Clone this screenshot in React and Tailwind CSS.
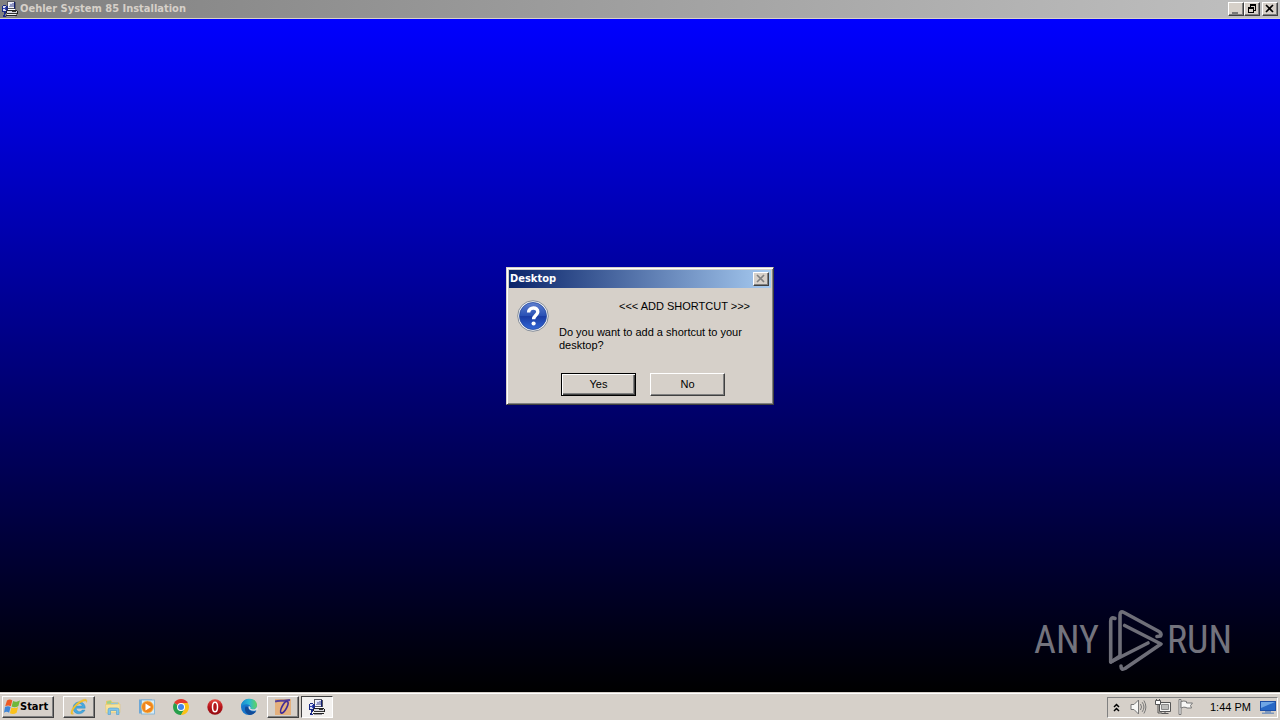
import { useState } from "react";

function InstallerIcon({ className }) {
    return (
        <svg viewBox="0 0 16 16" className={className} shapeRendering="crispEdges" aria-hidden="true">
            <path d="M5 0h8v1h1v7H5z" fill="#55555f" />
            <path d="M6 1h6v6H6z" fill="#f0f0f6" />
            <path d="M7 2h5v4H7z" fill="#8f95c0" />
            <path d="M7 2h3v1H8v2H7z" fill="#dfe4ff" />
            <path d="M12 1h1v7h-1z" fill="#14206e" />
            <path d="M0 5h1v6H0zM1 4h3v1H1zM4 5h2v5H4zM1 10h4v2H2v-1H1z" fill="#1a2a86" />
            <path d="M1 5h3v5H1z" fill="#dcdff2" />
            <path d="M1 7h2v1H1zM3 6h1v3H3z" fill="#3346b8" />
            <path d="M6 8h7v1H6z" fill="#fff" />
            <path d="M5 9h10v1H5zM4 10h1v2H4zM15 10h1v3h-1z" fill="#222" />
            <path d="M5 10h10v2H5z" fill="#d6d6de" />
            <path d="M10 10h4v1h-4zM5 12h10v1H5z" fill="#333" />
            <path d="M2 12h2v1H3v2h1v1H1v-2h1z" fill="#1a2a86" />
            <path d="M5 13h9v1H5z" fill="#f2f2f2" />
            <path d="M4 14h11v1H4z" fill="#222" />
            <path d="M5 15h8v1H5z" fill="#9a9aa4" />
        </svg>
    );
}

function WindowsLogo() {
    return (
        <svg viewBox="0 0 16 16" className="h-4 w-4 shrink-0" aria-hidden="true">
            <path d="M3 1.500C5 .2 6.800.3 8.300 1.500L6.800 7.300C5.200 6.200 3.200 6.200 1.200 7.300z" fill="#ed5a24" />
            <path d="M9.100 2c2 1 4.200 1 6.900-.8L14.400 7c-2.300 1.500-4.600 1.600-6.800.6z" fill="#6fb83b" />
            <path d="M1 8.100c2-1.100 4-1.100 5.600 0L5.100 13.700c-1.800-1.200-3.500-1.200-5.100.1z" fill="#3f86d8" />
            <path d="M7.400 8.400c2.200 1 4.400.9 6.700-.5L12.600 13.700c-2.300 1.600-4.500 1.600-6.700.5z" fill="#fbc21b" />
        </svg>
    );
}

function ExplorerIcon() {
    return (
        <svg viewBox="0 0 18 18" className="h-[18px] w-[18px]" aria-hidden="true">
            <path d="M15.200 10.200H6.200c.2 4 5 4.400 5.900 1.900h2.900C12.600 17.500 3 17.300 3.100 9.700 3.300 2 15.700 1.800 15.200 10.200zM6.300 8h5.900c-.3-3.100-5.400-3.100-5.900 0z" fill="#45a9e0" stroke="#2583bd" strokeWidth=".4" fillRule="evenodd" />
            <path d="M3.700 15.800C-.8 18.400.2 11 6.500 5.500 12.300.5 18.500-.6 16.500 4.500c.1-3-4.300-1.500-8.700 2.200C3.500 10.500.9 15.200 3.700 15.800z" fill="#f7c52b" stroke="#dca51b" strokeWidth=".3" />
        </svg>
    );
}

function FolderIcon() {
    return (
        <svg viewBox="0 0 18 18" className="h-[18px] w-[18px]" aria-hidden="true">
            <path d="M2 3l5-1 1 2 7 .5V14H2z" fill="#e9c963" />
            <path d="M3 3.500l4-.7.500 3H3z" fill="#9bd08b" />
            <path d="M7 5l7-.5V8H7z" fill="#86c3e8" />
            <path d="M1.500 6.500L16 6v8.500L2 15z" fill="#f8e29a" stroke="#dfc26b" strokeWidth=".5" />
            <path d="M4 16.500v-4.500q0-2 2-2h7q2 0 2 2v4.500h-2.500v-4h-6v4z" fill="#81c4ea" stroke="#4d9dcc" strokeWidth=".6" />
        </svg>
    );
}

function MediaIcon() {
    return (
        <svg viewBox="0 0 18 18" className="h-[18px] w-[18px]" aria-hidden="true">
            <rect x="1" y="1.500" width="13" height="14" fill="#6da7d6" />
            <rect x="3.500" y="2" width="13" height="14" fill="#d7ecf8" stroke="#79aed5" strokeWidth=".8" />
            <circle cx="9.500" cy="9" r="6" fill="#f0861b" stroke="#fac15f" strokeWidth=".8" />
            <path d="M7.500 5.600l5.600 3.400-5.600 3.400z" fill="#fff" />
        </svg>
    );
}

function ChromeIcon() {
    return (
        <svg viewBox="0 0 18 18" className="h-[18px] w-[18px]" aria-hidden="true">
            <path d="M9 9L2.100 5A8 8 0 0 1 15.900 5z" fill="#e33b2e" />
            <path d="M9 9L2.100 5A8 8 0 0 0 9 17l3.500-6z" fill="#279f4a" />
            <path d="M9 9V5h6.900A8 8 0 0 1 9 17l3.500-6z" fill="#fbc116" />
            <circle cx="9" cy="9" r="4" fill="#fff" />
            <circle cx="9" cy="9" r="3" fill="#4285e8" />
        </svg>
    );
}

function OperaIcon() {
    return (
        <svg viewBox="0 0 18 18" className="h-[18px] w-[18px]" aria-hidden="true">
            <defs>
                <linearGradient id="opera" x1="0" y1="0" x2="0" y2="1">
                    <stop offset="0" stopColor="#e74b43" />
                    <stop offset=".5" stopColor="#b6141b" />
                    <stop offset="1" stopColor="#930c10" />
                </linearGradient>
            </defs>
            <circle cx="9" cy="9" r="7.700" fill="url(#opera)" />
            <ellipse cx="9" cy="9" rx="2.500" ry="4.800" fill="#b3151b" stroke="#fff" strokeWidth="1.500" />
        </svg>
    );
}

function EdgeIcon() {
    return (
        <svg viewBox="0 0 18 18" className="h-[18px] w-[18px]" aria-hidden="true">
            <defs>
                <linearGradient id="edge" x1="0" y1="0" x2="1" y2="0">
                    <stop offset="0" stopColor="#1788cf" />
                    <stop offset=".5" stopColor="#29b7d5" />
                    <stop offset="1" stopColor="#63d45c" />
                </linearGradient>
            </defs>
            <circle cx="9" cy="9" r="8" fill="#1776cb" />
            <path d="M1 9C1-1.500 17-1.500 17 7c0 5-6 4.800-6.800 3.300C12.400 7 5 4 1 9z" fill="url(#edge)" />
            <path d="M5.600 8.500c-2 3.500.9 8.300 4.400 8.400 3 0 5.200-2 6.200-4C12 15 8 12.300 8.500 9z" fill="#124b97" />
            <path d="M8.700 8.300c-1 3.500 3 5.500 7.600 4 .9-.4 1.200.3.700 1L18 11l-1-3c-.5 3.800-5.300 3.900-6.800 2.300.9-.8 0-2-1.500-2z" fill="#e0e0dd" />
        </svg>
    );
}

function SystemIcon() {
    return (
        <svg viewBox="0 0 16 16" className="h-4 w-4" aria-hidden="true">
            <path d="M0 0h16v16H0z" fill="#e4b07d" />
            <path d="M0 2.500Q2 1.500 9 1.800L15 1" fill="none" stroke="#55409a" strokeWidth="2" />
            <ellipse cx="9.300" cy="8.300" rx="2.300" ry="6.500" transform="rotate(28 9.300 8.300)" fill="none" stroke="#402c98" strokeWidth="1.700" />
        </svg>
    );
}

function QuestionIcon() {
    return (
        <svg viewBox="0 0 32 32" className="h-8 w-8 shrink-0" aria-hidden="true">
            <defs>
                <linearGradient id="question" x1="0" y1="0" x2="0" y2="1">
                    <stop offset="0" stopColor="#5f80cf" />
                    <stop offset=".5" stopColor="#2850b5" />
                    <stop offset=".52" stopColor="#1a3ca4" />
                    <stop offset="1" stopColor="#3267d6" />
                </linearGradient>
            </defs>
            <circle cx="16" cy="16" r="15.300" fill="#f2f4f7" stroke="#858d99" strokeWidth="1" />
            <circle cx="16" cy="16" r="13.500" fill="url(#question)" stroke="#2549a0" strokeWidth=".8" />
            <path d="M11.600 12.500c.2-6 9.400-5.800 9.200-.6-.1 3.300-4.200 3.500-4.200 7.300" fill="none" stroke="#fff" strokeWidth="3.400" />
            <circle cx="16.600" cy="23.500" r="2.100" fill="#fff" />
        </svg>
    );
}

function SpeakerIcon() {
    return (
        <svg viewBox="0 0 18 16" className="h-4 w-[18px]" fill="none" stroke="#777" aria-hidden="true">
            <path d="M1 5.500h3L8.500 1v14L4 10.500H1z" fill="#f7f7f5" />
            <path d="M10.500 5q2 3 0 6M12.200 3.200q3.500 4.800 0 9.600M13.900 1.500q4 6.500 0 13" />
        </svg>
    );
}

function NetworkIcon() {
    return (
        <svg viewBox="0 0 16 16" className="h-4 w-4" fill="none" stroke="#555" aria-hidden="true">
            <path d="M4.500 3.500h11v9h-11z" fill="#f5f5f3" />
            <path d="M6.500 5.500h7v5h-7z" fill="#bdbdbb" stroke="#888" />
            <path d="M10 12.500v2M6.500 14.500h7" />
            <path d="M.5 1.500h5v4h-5z" fill="#fff" />
            <path d="M1.500 0v2M4.500 0v2M3 5.500v8.500h4" />
        </svg>
    );
}

function FlagIcon() {
    return (
        <svg viewBox="0 0 16 16" className="h-4 w-4" fill="none" stroke="#777" aria-hidden="true">
            <path d="M1 .5h2v15H1z" fill="#fff" />
            <path d="M3 2.500q3-1 5.500 0v1.500h6l-2 2.500 1 2.500H8.500V8.500Q6 7.500 3 9z" fill="#f8f8f6" />
        </svg>
    );
}

function DesktopIcon() {
    return (
        <svg viewBox="0 0 16 16" className="h-4 w-4" aria-hidden="true">
            <path d="M0 2h16v10H0z" fill="#1d4fa6" />
            <path d="M1 3h14v8H1z" fill="#2868c5" />
            <path d="M1 3h14L1 9z" fill="#6fa6e5" />
            <path d="M5 12h6v1.500H5zM2 13.500h12V15H2z" fill="#7e98bd" />
        </svg>
    );
}

function Watermark() {
    return (
        <div className="absolute right-12 bottom-[20px] flex h-16 items-center gap-1 font-['Roboto_Condensed','Liberation_Sans_Narrow',sans-serif] text-[38px] leading-none text-[#73737d]">
            <span>ANY</span>
            <svg viewBox="0 0 56 64" className="ml-1 h-16 w-14" fill="none" stroke="#6e6e78" strokeWidth="3.600" strokeLinejoin="round" strokeLinecap="round" aria-hidden="true">
                <path d="M8 10.500Q3.700 8.500 3.700 13v41L41 35" />
                <path d="M13 47V7q0-4.500 4-2.500L52 23.500q3 2 1.500 4.500L50 28.500" />
                <path d="M17.700 17.500L54 36 18 60.500q-4 2-4-2.500" />
                <path d="M4 54L13 48" />
            </svg>
            <span>RUN</span>
        </div>
    );
}

const raised =
    "border border-t-white border-l-white border-r-[#404040] border-b-[#404040] bg-[#d6d0c9] shadow-[inset_-1px_-1px_0_#808080]";

const tasks = [
    { name: "Internet Explorer", icon: <ExplorerIcon />, state: "open" },
    { name: "Windows Explorer", icon: <FolderIcon /> },
    { name: "Media Player", icon: <MediaIcon /> },
    { name: "Chrome", icon: <ChromeIcon /> },
    { name: "Opera", icon: <OperaIcon /> },
    { name: "Edge", icon: <EdgeIcon /> },
    { name: "System 85", icon: <SystemIcon />, state: "open" },
    { name: "Installation", icon: <InstallerIcon className="h-4 w-4" />, state: "active" },
];

const taskStyles = {
    open: raised,
    active: "border border-t-[#404040] border-l-[#404040] border-r-white border-b-white bg-[#f3f1ef]",
};

function TitleBar() {
    return (
        <header className="flex h-[19px] items-center border-b border-[#d6d0c9] bg-linear-to-r/srgb from-[#808080] to-[#c0c0c0] px-[2px]">
            <InstallerIcon className="h-4 w-4" />
            <h1 className="ml-[2px] flex-1 text-[11px] font-bold text-[#d6d0c9] font-['DejaVu_Sans_Condensed',sans-serif]">
                Oehler System 85 Installation
            </h1>
            <div className="flex">
                <button aria-label="Minimize" className={`flex h-[14px] w-4 items-center justify-center ${raised}`}>
                    <svg viewBox="0 0 10 10" className="h-[10px] w-[10px]"><path d="M1 8h6v2H1z" fill="#777" /></svg>
                </button>
                <button aria-label="Restore" className={`flex h-[14px] w-4 items-center justify-center ${raised}`}>
                    <svg viewBox="0 0 10 10" className="h-[10px] w-[10px]" shapeRendering="crispEdges">
                        <path d="M3 0h6v7H7V6h1V2H4v1H3zM1 3h6v6H1zm1 2v3h4V5z" fill="#000" fillRule="evenodd" />
                    </svg>
                </button>
                <button aria-label="Close" className={`ml-[2px] flex h-[14px] w-4 items-center justify-center ${raised}`}>
                    <svg viewBox="0 0 10 10" className="h-[10px] w-[10px]" stroke="#000" strokeWidth="1.600"><path d="M1 1l7 7M8 1L1 8" /></svg>
                </button>
            </div>
        </header>
    );
}

function ShortcutDialog({ onClose }) {
    return (
        <div
            role="dialog"
            aria-labelledby="dialog-title"
            className="absolute top-[248px] left-1/2 w-[268px] -translate-x-1/2 border border-t-[#d6d0c9] border-l-[#d6d0c9] border-r-[#404040] border-b-[#404040] bg-[#d6d0c9] p-[2px] pb-2 shadow-[inset_1px_1px_0_#fff,inset_-1px_-1px_0_#808080]"
        >
            <div className="flex h-[18px] items-center justify-between bg-linear-to-r/srgb from-[#0a246a] to-[#a6caf0] pr-[2px] pl-px">
                <h2 id="dialog-title" className="text-[11px] font-bold text-white font-['DejaVu_Sans_Condensed',sans-serif]">
                    Desktop
                </h2>
                <button aria-label="Close" onClick={onClose} className={`flex h-[14px] w-4 items-center justify-center ${raised}`}>
                    <svg viewBox="0 0 10 10" className="h-[10px] w-[10px]" stroke="#808080" strokeWidth="1.600"><path d="M1 1l7 7M8 1L1 8" /></svg>
                </button>
            </div>
            <div className="flex gap-[10px] px-2 pt-3">
                <QuestionIcon />
                <div className="flex-1 text-[11px] leading-[13px]">
                    <p className="pl-[60px] whitespace-nowrap">{"<<< ADD SHORTCUT >>>"}</p>
                    <p className="mt-[13px]">
                        Do you want to add a shortcut to your
                        <br />
                        desktop?
                    </p>
                </div>
            </div>
            <div className="mt-[21px] flex gap-[14px] pl-[52px]">
                <button onClick={onClose} className="h-[23px] w-[75px] border border-black bg-[#d6d0c9] text-[11px] shadow-[inset_1px_1px_0_#fff,inset_-1px_-1px_0_#404040,inset_-2px_-2px_0_#808080]">
                    Yes
                </button>
                <button onClick={onClose} className={`h-[23px] w-[75px] text-[11px] ${raised}`}>
                    No
                </button>
            </div>
        </div>
    );
}

function Taskbar() {
    return (
        <footer className="flex h-7 items-center border-t border-[#d6d0c9] bg-[#d6d0c9] px-[2px] pt-px shadow-[inset_0_1px_0_#fff]">
            <button className={`flex h-[22px] w-[52px] items-center pl-px text-[11px] font-bold font-['DejaVu_Sans_Condensed',sans-serif] ${raised}`}>
                <WindowsLogo />
                Start
            </button>
            <nav className="ml-[9px] flex flex-1 gap-[2px]">
                {tasks.map((t) => (
                    <button key={t.name} aria-label={t.name} className={`flex h-[22px] w-8 items-center justify-center ${taskStyles[t.state] || ""}`}>
                        {t.icon}
                    </button>
                ))}
            </nav>
            <div className="flex h-[21px] items-center border border-t-[#808080] border-l-[#808080] border-r-white border-b-white pr-px pl-[5px]">
                <button aria-label="Show hidden icons" className="mr-[10px]">
                    <svg viewBox="0 0 7 9" className="h-[9px] w-[7px]" fill="none" stroke="#000" strokeWidth="1.500"><path d="M1 4l2.500-2.500L6 4M1 8l2.500-2.500L6 8" /></svg>
                </button>
                <div className="flex gap-[7px]">
                    <SpeakerIcon />
                    <NetworkIcon />
                    <FlagIcon />
                </div>
                <time className="ml-4 w-[50px] text-[11px] whitespace-nowrap">1:44 PM</time>
                <button aria-label="Show desktop">
                    <DesktopIcon />
                </button>
            </div>
        </footer>
    );
}

export default function App() {
    const [open, setOpen] = useState(true);

    return (
        <div className="flex min-h-screen flex-col font-['Liberation_Sans',sans-serif] text-black">
            <TitleBar />
            <main className="relative flex-1 overflow-hidden bg-linear-to-b/srgb from-[#0000ff] to-black">
                {open && <ShortcutDialog onClose={() => setOpen(false)} />}
                <Watermark />
            </main>
            <Taskbar />
        </div>
    );
}
